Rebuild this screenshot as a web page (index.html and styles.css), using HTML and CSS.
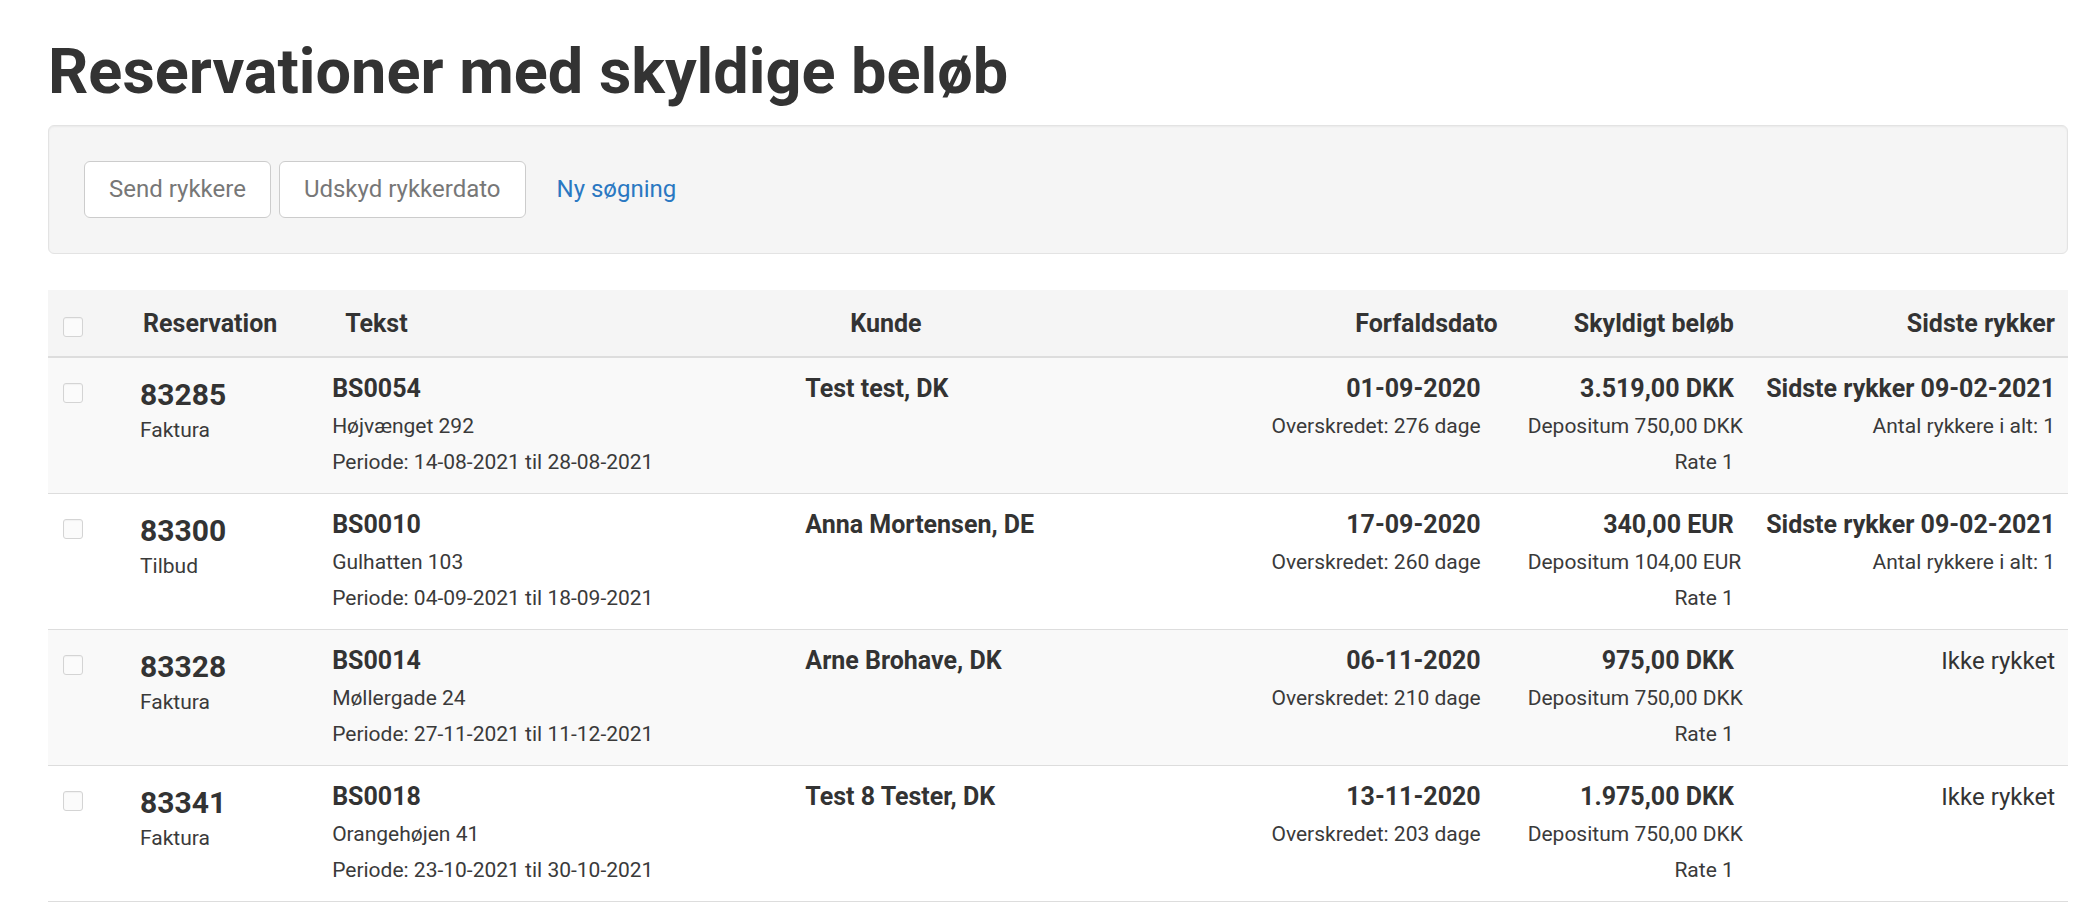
FILE: index.html
```html
<!DOCTYPE html>
<html lang="da">
<head>
<meta charset="utf-8">
<title>Reservationer med skyldige beløb</title>
<link rel="stylesheet" href="styles.css">
</head>
<body>
<h1 class="page-title">Reservationer med skyldige beløb</h1>

<div class="toolbar">
  <button class="btn" type="button">Send rykkere</button>
  <button class="btn" type="button">Udskyd rykkerdato</button>
  <a class="btn btn-link" href="#">Ny søgning</a>
</div>

<table class="debts">
  <colgroup>
    <col class="col-check">
    <col class="col-res">
    <col class="col-text">
    <col class="col-customer">
    <col class="col-due">
    <col class="col-amount">
    <col class="col-reminder">
  </colgroup>
  <thead>
    <tr>
      <th class="cell-check"><span class="checkbox checkbox-head"></span></th>
      <th class="th-res">Reservation</th>
      <th class="th-text">Tekst</th>
      <th class="th-customer">Kunde</th>
      <th class="num">Forfaldsdato</th>
      <th class="num">Skyldigt beløb</th>
      <th class="num">Sidste rykker</th>
    </tr>
  </thead>
  <tbody>
    <tr>
      <td class="cell-check"><span class="checkbox"></span></td>
      <td><div class="res-no">83285</div><div class="line">Faktura</div></td>
      <td><div class="strong">BS0054</div><div class="line">Højvænget 292</div><div class="line">Periode: 14-08-2021 til 28-08-2021</div></td>
      <td><div class="strong">Test test, DK</div></td>
      <td class="num due"><div class="strong">01-09-2020</div><div class="line">Overskredet: 276 dage</div></td>
      <td class="num"><div class="strong">3.519,00 DKK</div><div class="line">Depositum 750,00 DKK</div><div class="line">Rate 1</div></td>
      <td class="num"><div class="strong">Sidste rykker 09-02-2021</div><div class="line">Antal rykkere i alt: 1</div></td>
    </tr>
    <tr>
      <td class="cell-check"><span class="checkbox"></span></td>
      <td><div class="res-no">83300</div><div class="line">Tilbud</div></td>
      <td><div class="strong">BS0010</div><div class="line">Gulhatten 103</div><div class="line">Periode: 04-09-2021 til 18-09-2021</div></td>
      <td><div class="strong">Anna Mortensen, DE</div></td>
      <td class="num due"><div class="strong">17-09-2020</div><div class="line">Overskredet: 260 dage</div></td>
      <td class="num"><div class="strong">340,00 EUR</div><div class="line">Depositum 104,00 EUR</div><div class="line">Rate 1</div></td>
      <td class="num"><div class="strong">Sidste rykker 09-02-2021</div><div class="line">Antal rykkere i alt: 1</div></td>
    </tr>
    <tr>
      <td class="cell-check"><span class="checkbox"></span></td>
      <td><div class="res-no">83328</div><div class="line">Faktura</div></td>
      <td><div class="strong">BS0014</div><div class="line">Møllergade 24</div><div class="line">Periode: 27-11-2021 til 11-12-2021</div></td>
      <td><div class="strong">Arne Brohave, DK</div></td>
      <td class="num due"><div class="strong">06-11-2020</div><div class="line">Overskredet: 210 dage</div></td>
      <td class="num"><div class="strong">975,00 DKK</div><div class="line">Depositum 750,00 DKK</div><div class="line">Rate 1</div></td>
      <td class="num"><div class="plain">Ikke rykket</div></td>
    </tr>
    <tr>
      <td class="cell-check"><span class="checkbox"></span></td>
      <td><div class="res-no">83341</div><div class="line">Faktura</div></td>
      <td><div class="strong">BS0018</div><div class="line">Orangehøjen 41</div><div class="line">Periode: 23-10-2021 til 30-10-2021</div></td>
      <td><div class="strong">Test 8 Tester, DK</div></td>
      <td class="num due"><div class="strong">13-11-2020</div><div class="line">Overskredet: 203 dage</div></td>
      <td class="num"><div class="strong">1.975,00 DKK</div><div class="line">Depositum 750,00 DKK</div><div class="line">Rate 1</div></td>
      <td class="num"><div class="plain">Ikke rykket</div></td>
    </tr>
  </tbody>
</table>
</body>
</html>
```

FILE: styles.css
```css
html, body {
  background: #fff;
}

body {
  margin: 0;
  padding: 0 14px 0 48px;
  font-family: Roboto, "Liberation Sans", Arial, sans-serif;
  color: #333;
}

.page-title {
  margin: 37px 0 19px;
  font-size: 63px;
  line-height: 69px;
  font-weight: 700;
  color: #333;
}

.toolbar {
  display: flex;
  align-items: center;
  gap: 8px;
  padding: 35px;
  background: #f5f5f5;
  border: 1px solid #e3e3e3;
  border-radius: 6px;
  box-shadow: inset 0 1px 2px rgba(0, 0, 0, 0.05);
}

.btn {
  display: inline-block;
  margin: 0;
  padding: 9px 24px;
  font-family: inherit;
  font-size: 24px;
  line-height: 37px;
  font-weight: 400;
  color: #777;
  background: #fff;
  border: 1px solid #ccc;
  border-radius: 6px;
  text-decoration: none;
  cursor: pointer;
}

.btn-link {
  padding-left: 22px;
  background: transparent;
  border-color: transparent;
  color: #2a78c2;
}

.debts {
  width: 100%;
  margin-top: 36px;
  border-collapse: collapse;
  table-layout: fixed;
}

.col-check { width: 77px; }
.col-res { width: 192px; }
.col-text { width: 473px; }
.col-customer { width: 460px; }
.col-due { width: 262px; }
.col-amount { width: 236px; }
.col-reminder { width: 319px; }

.debts th {
  padding: 16px 15px 14px;
  font-size: 25px;
  line-height: 36px;
  font-weight: 700;
  text-align: left;
  white-space: nowrap;
  background: #f5f5f5;
  border-bottom: 2px solid #ddd;
}

.debts th.th-res {
  padding-left: 18px;
}

.debts th.th-text {
  padding-left: 28px;
}

.debts th.th-customer {
  padding-left: 60px;
}

.debts td {
  padding: 12px 15px 13px;
  vertical-align: top;
  white-space: nowrap;
  border-top: 1px solid #ddd;
}

.debts tbody tr:first-child td {
  border-top: 0;
}

.debts tbody tr:last-child td {
  border-bottom: 1px solid #ddd;
}

.debts tbody tr:nth-child(odd) {
  background: #f9f9f9;
}

.debts .num {
  text-align: right;
}

.debts th:last-child,
.debts td:last-child {
  padding-right: 13px;
}

.debts td.due {
  padding-right: 32px;
}

.checkbox {
  display: block;
  width: 18px;
  height: 18px;
  margin-top: 13px;
  background: #fbfbfb;
  border: 1px solid #d4d4d4;
  border-radius: 3px;
  box-shadow: inset 0 1px 1px rgba(0, 0, 0, 0.04);
}

.checkbox-head {
  margin-top: 6px;
}

.res-no {
  padding-top: 8px;
  font-size: 30px;
  line-height: 34px;
  font-weight: 700;
}

.strong {
  font-size: 25px;
  line-height: 38px;
  font-weight: 700;
}

.plain {
  font-size: 24px;
  line-height: 38px;
  font-weight: 400;
}

.line {
  font-size: 21px;
  line-height: 36px;
  color: #3a3a3a;
}
```
